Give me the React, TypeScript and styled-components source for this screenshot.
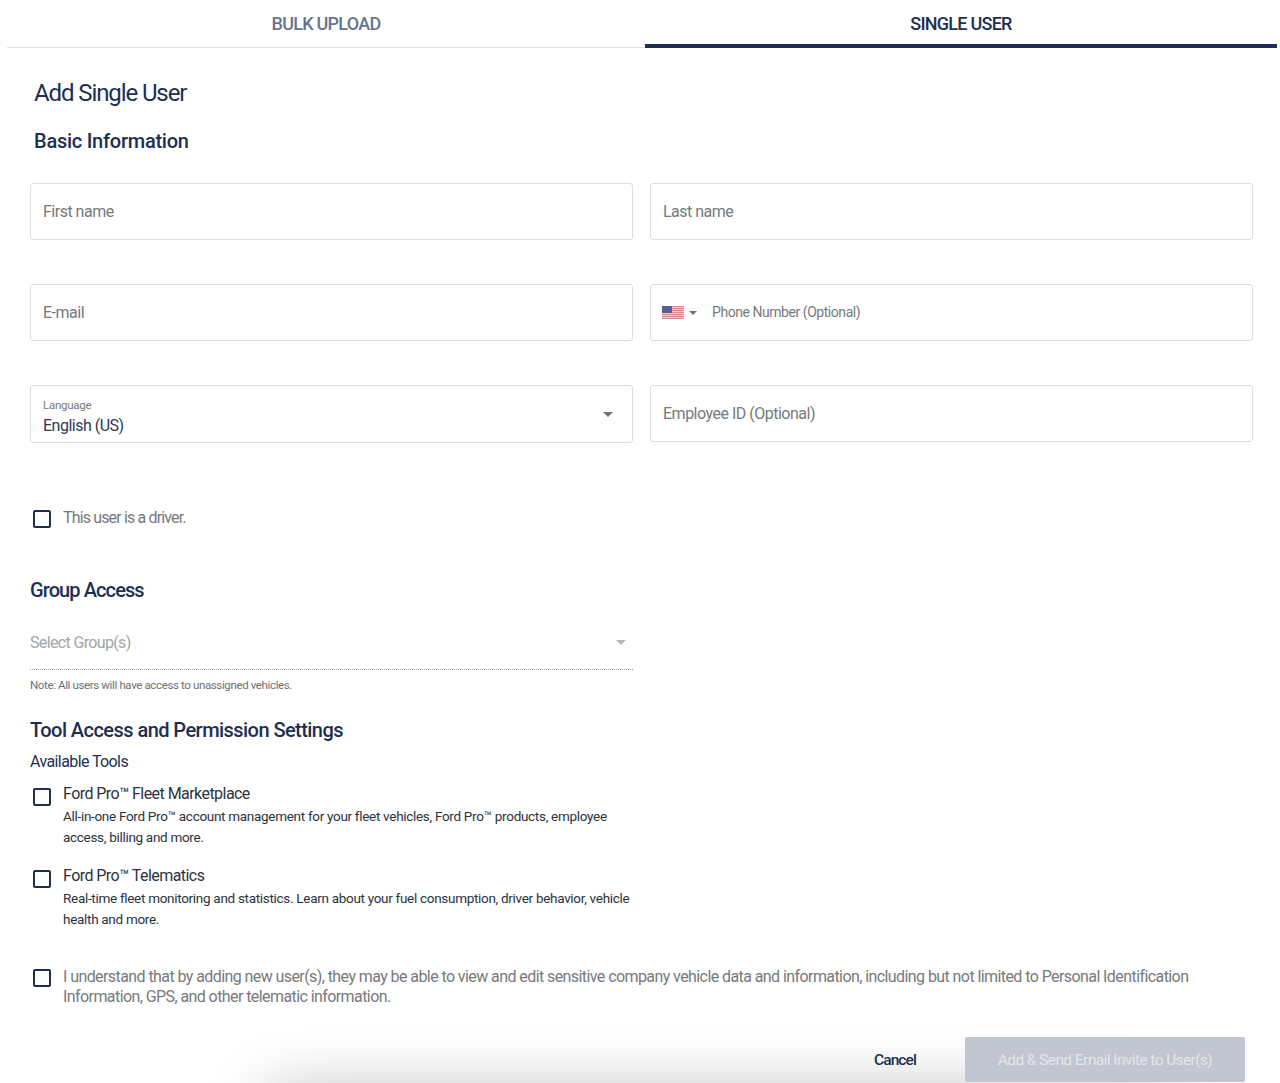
import React from "react";
import styled, { createGlobalStyle } from "styled-components";

const NAVY = "#1c2f52";
const FONT = `"Roboto", "Liberation Sans", sans-serif`;

const GlobalStyle = createGlobalStyle`
  html, body { margin: 0; padding: 0; background: #fff; }
  body { font-family: ${FONT}; color: ${NAVY}; }
`;

const Page = styled.div`
  width: 1280px;
  height: 1083px;
  overflow: hidden;
  box-sizing: border-box;
`;

const Tabs = styled.div`
  display: grid;
  grid-template-columns: 638px 632px;
  margin: 0 3px 0 7px;
  height: 48px;
`;

const Tab = styled.div<{ $active?: boolean }>`
  display: flex;
  align-items: flex-start;
  justify-content: center;
  padding-top: 13px;
  box-sizing: border-box;
  font-size: 18px;
  line-height: 22px;
  font-weight: 500;
  letter-spacing: -0.75px;
  color: ${(p) => (p.$active ? NAVY : "#66758f")};
  border-bottom: ${(p) => (p.$active ? `4px solid ${NAVY}` : "1.5px solid #e2e3e5")};
  height: 48px;
`;

const Form = styled.div`
  padding: 30px 27px 0 30px;
`;

const Title = styled.h1`
  margin: 0 0 0 4px;
  font-size: 24px;
  line-height: 30px;
  font-weight: 400;
  letter-spacing: -1.1px;
  color: ${NAVY};
`;

const Heading = styled.h2<{ $inset?: boolean; $top: number; $spacing: number }>`
  margin: ${(p) => p.$top}px 0 0 ${(p) => (p.$inset ? 4 : 0)}px;
  font-size: 20px;
  line-height: 26px;
  font-weight: 500;
  letter-spacing: ${(p) => p.$spacing}px;
  color: ${NAVY};
`;

const FieldGrid = styled.div`
  display: grid;
  grid-template-columns: 603px 603px;
  column-gap: 17px;
  row-gap: 44px;
  margin-top: 29px;
  align-items: start;
`;

const Field = styled.div<{ $tall?: boolean }>`
  height: ${(p) => (p.$tall ? 58 : 57)}px;
  box-sizing: border-box;
  border: 1px solid #dcdde0;
  border-radius: 3px;
  display: flex;
  align-items: center;
  padding: 0 ${(p) => (p.$tall ? 19 : 12)}px 0 12px;
  font-size: 16px;
  letter-spacing: -0.5px;
  color: #77797d;
  background: #fff;
`;

const PhoneText = styled.span`
  font-size: 14px;
  letter-spacing: -0.45px;
  margin: -2px 0 0 15px;
`;

const FlagButton = styled.span`
  display: flex;
  align-items: center;
  gap: 5px;
  margin-left: -1px;
`;

const SelectBody = styled.div`
  flex: 1;
  display: flex;
  flex-direction: column;
  padding-top: 6px;
`;

const SelectLabel = styled.span`
  font-size: 11.5px;
  line-height: 14px;
  letter-spacing: -0.25px;
  color: #77797d;
`;

const SelectValue = styled.span`
  font-size: 16px;
  line-height: 22px;
  letter-spacing: -0.5px;
  color: #2b3a52;
  margin-top: 3px;
`;

const Caret = styled.span<{ $color?: string }>`
  width: 0;
  height: 0;
  border-left: 5px solid transparent;
  border-right: 5px solid transparent;
  border-top: 5px solid ${(p) => p.$color || "#6f7276"};
`;

const SmallCaret = styled(Caret)`
  border-left-width: 4px;
  border-right-width: 4px;
  border-top-width: 4px;
`;

const CheckRow = styled.label<{ $top: number; $width?: number }>`
  display: flex;
  gap: 12px;
  margin: ${(p) => p.$top}px 0 0 3px;
  width: ${(p) => (p.$width ? `${p.$width}px` : "auto")};
`;

const Box = styled.span`
  flex: none;
  width: 18px;
  height: 18px;
  box-sizing: border-box;
  border: 2px solid ${NAVY};
  border-radius: 2px;
  margin-top: 4px;
`;

const CheckText = styled.span<{ $tight?: boolean }>`
  font-size: 16px;
  line-height: 20px;
  letter-spacing: ${(p) => (p.$tight ? -0.85 : -0.58)}px;
  color: #77797d;
  margin-top: 2px;
`;

const GroupSelect = styled.div`
  width: 603px;
  height: 46px;
  margin-top: 21px;
  box-sizing: border-box;
  border-bottom: 1px dotted #9a9a9a;
  display: flex;
  align-items: center;
  justify-content: space-between;
  padding: 0 7px 8px 0;
  font-size: 16px;
  letter-spacing: -0.65px;
  color: #a3a5a8;
`;

const Note = styled.div`
  margin-top: 8px;
  font-size: 11.5px;
  line-height: 14px;
  letter-spacing: -0.37px;
  color: #6d6f73;
`;

const SubHeading = styled.div`
  margin-top: 9px;
  font-size: 16px;
  line-height: 20px;
  letter-spacing: -0.6px;
  color: ${NAVY};
`;

const ToolBody = styled.span`
  display: flex;
  flex-direction: column;
`;

const ToolName = styled.span`
  font-size: 16px;
  line-height: 20px;
  letter-spacing: -0.55px;
  color: #2b3340;
`;

const ToolText = styled.span`
  font-size: 13.5px;
  line-height: 21px;
  letter-spacing: -0.3px;
  color: #2b3340;
  margin-top: 2px;
`;

const Footer = styled.div`
  position: relative;
  margin: 20px -27px 0 -30px;
  height: 56px;
  display: flex;
  justify-content: flex-end;
  align-items: flex-start;
  padding: 10px 35px 0 0;
  box-sizing: border-box;

  /* shadow of the bar that sits just under the fold */
  &::before {
    content: "";
    position: absolute;
    left: 270px;
    right: 110px;
    top: 70px;
    height: 60px;
    box-shadow: 0 0 67px rgba(0, 0, 0, 0.32);
  }
`;

const CancelButton = styled.button`
  position: relative;
  border: 0;
  background: none;
  font-family: ${FONT};
  font-size: 15.5px;
  font-weight: 500;
  letter-spacing: -0.9px;
  color: ${NAVY};
  height: 45px;
  padding: 0;
  margin-right: 49px;
`;

const SubmitButton = styled.button`
  position: relative;
  width: 280px;
  height: 45px;
  border: 0;
  border-radius: 2px;
  background: #c1c6d0;
  font-family: ${FONT};
  font-size: 15.5px;
  letter-spacing: -0.6px;
  color: #e3e5ea;
  padding: 0;
`;

const UsFlag = () => (
  <svg width="22" height="13" viewBox="0 0 22 13" aria-hidden="true">
    <rect width="22" height="13" fill="#eec5c7" />
    {[0, 2, 4, 6, 8, 10, 12].map((y) => (
      <rect key={y} y={y} width="22" height="1" fill="#dc8a8f" />
    ))}
    <rect width="10" height="7" fill="#5a5f92" />
  </svg>
);

export default function App() {
  return (
    <Page>
      <GlobalStyle />
      <Tabs>
        <Tab>BULK UPLOAD</Tab>
        <Tab $active>SINGLE USER</Tab>
      </Tabs>
      <Form>
        <Title>Add Single User</Title>
        <Heading $inset $top={20} $spacing={-0.25}>Basic Information</Heading>
        <FieldGrid>
          <Field>First name</Field>
          <Field>Last name</Field>
          <Field>E-mail</Field>
          <Field>
            <FlagButton>
              <UsFlag />
              <SmallCaret />
            </FlagButton>
            <PhoneText>Phone Number (Optional)</PhoneText>
          </Field>
          <Field $tall>
            <SelectBody>
              <SelectLabel>Language</SelectLabel>
              <SelectValue>English (US)</SelectValue>
            </SelectBody>
            <Caret />
          </Field>
          <Field>Employee ID (Optional)</Field>
        </FieldGrid>
        <CheckRow $top={63}>
          <Box />
          <CheckText $tight>This user is a driver.</CheckText>
        </CheckRow>
        <Heading $top={49} $spacing={-0.9}>Group Access</Heading>
        <GroupSelect>
          Select Group(s)
          <Caret $color="#b5b6b8" />
        </GroupSelect>
        <Note>Note: All users will have access to unassigned vehicles.</Note>
        <Heading $top={25} $spacing={-0.55}>Tool Access and Permission Settings</Heading>
        <SubHeading>Available Tools</SubHeading>
        <CheckRow $top={12} $width={600}>
          <Box />
          <ToolBody>
            <ToolName>Ford Pro™ Fleet Marketplace</ToolName>
            <ToolText>
              All-in-one Ford Pro™ account management for your fleet vehicles, Ford Pro™ products, employee access, billing and more.
            </ToolText>
          </ToolBody>
        </CheckRow>
        <CheckRow $top={18} $width={600}>
          <Box />
          <ToolBody>
            <ToolName>Ford Pro™ Telematics</ToolName>
            <ToolText>
              Real-time fleet monitoring and statistics. Learn about your fuel consumption, driver behavior, vehicle health and more.
            </ToolText>
          </ToolBody>
        </CheckRow>
        <CheckRow $top={35} $width={1160}>
          <Box />
          <CheckText>
            I understand that by adding new user(s), they may be able to view and edit sensitive company vehicle data and information, including but not limited to Personal Identification Information, GPS, and other telematic information.
          </CheckText>
        </CheckRow>
        <Footer>
          <CancelButton>Cancel</CancelButton>
          <SubmitButton>Add &amp; Send Email Invite to User(s)</SubmitButton>
        </Footer>
      </Form>
    </Page>
  );
}
